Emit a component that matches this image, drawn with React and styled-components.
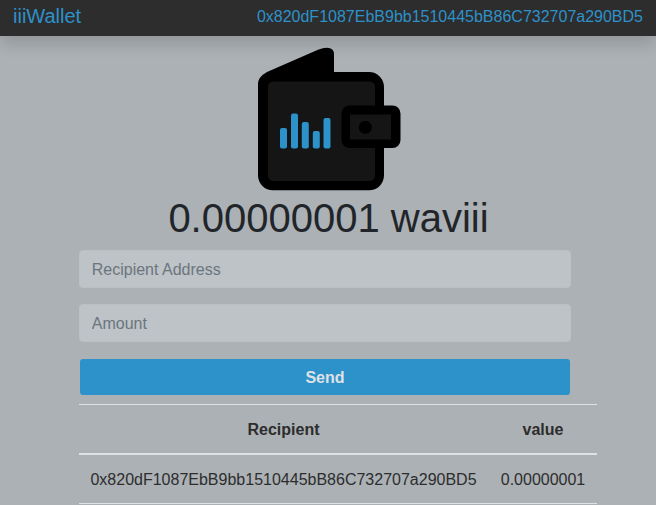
import React from 'react';
import styled, { createGlobalStyle } from 'styled-components';

const ADDRESS = '0x820dF1087EbB9bb1510445bB86C732707a290BD5';

const GlobalStyle = createGlobalStyle`
  *, *::before, *::after { box-sizing: border-box; }
  body {
    margin: 0;
    overflow: hidden;
    background: #acb1b5;
    color: #2d2d2d;
    font: 16px/24px "Liberation Sans", Arial, sans-serif;
  }
`;

const Page = styled.div`
  height: 505px;
  overflow: hidden;
`;

const Navbar = styled.nav`
  display: flex;
  justify-content: space-between;
  align-items: center;
  height: 36px;
  padding: 0 13px 4px;
  background: #2d2d2d;
  color: #2d91ca;
  box-shadow: 0 8px 16px rgba(0, 0, 0, 0.15);
`;

const Brand = styled.span`
  font-size: 20px;
  line-height: 30px;
`;

const Account = styled.span`
  padding-top: 2px;
  white-space: nowrap;
`;

const Hero = styled.header`
  display: flex;
  flex-direction: column;
  align-items: center;
  padding-top: 11px;
`;

const Logo = styled.svg`
  display: block;
  width: 144px;
  height: 144px;
  margin-left: 3px;
`;

const Balance = styled.h1`
  margin: 3px 0 8px;
  padding-left: 1px;
  color: #212529;
  font-size: 40px;
  font-weight: 400;
  line-height: 48px;
`;

const Content = styled.main`
  width: 492px;
  margin-left: 79px;
`;

const Form = styled.form`
  display: grid;
  gap: 16px;
`;

const Field = styled.input`
  width: 100%;
  height: 38px;
  padding: 7px 12px 5px 11.75px;
  border: 1px solid #bac0c4;
  border-radius: 4px;
  background: #bdc3c7;
  color: #2d2d2d;
  font: inherit;
  &::placeholder { color: #6c757d; opacity: 1; }
`;

const SendButton = styled.button`
  height: 36px;
  margin: 1px 1px 0;
  padding: 2px 0 0;
  border: 0;
  border-radius: 3px;
  background: #2d91ca;
  color: #dee2e6;
  font: inherit;
  font-weight: 700;
`;

const History = styled.table`
  width: 518px;
  margin-top: 9px;
  border-spacing: 0;
  text-align: center;
  color: #2d2d2d;
`;

const HeadCell = styled.th`
  width: ${({ $width }) => $width};
  padding: 13px 0 11px;
  border-top: 1px solid #dee2e6;
  border-bottom: 2px solid #dee2e6;
  &:last-child { padding-left: 1px; }
`;

const Cell = styled.td`
  padding: 13px 0 11px;
  border-bottom: 1px solid #dee2e6;
  &:last-child { padding-left: 1px; }
`;

const BARS = [
  [280, 128],
  [291, 113.5],
  [301.8, 122],
  [312.8, 131],
  [323.5, 118],
];

function WalletLogo() {
  return (
    <Logo viewBox="258 47 144 144" aria-label="Wallet">
      <path d="M258 87 V84 Q258 77 267 72 L318 49.8 Q325 47 329 48 Q334 49 334 54 V87Z" />
      <rect x="258" y="72" width="126" height="118.3" rx="15" />
      <rect x="268" y="81.5" width="107" height="99.5" rx="5.5" fill="#151515" />
      <rect x="341.5" y="105.5" width="59" height="42.5" rx="8" />
      <rect x="350" y="114.5" width="41" height="25" fill="#151515" />
      <circle cx="365.3" cy="127.3" r="6.5" />
      {BARS.map(([x, y]) => (
        <rect key={x} x={x} y={y} width="7" height={148.5 - y} rx="2" fill="#2d91ca" />
      ))}
    </Logo>
  );
}

export default function App() {
  return (
    <Page>
      <GlobalStyle />
      <Navbar>
        <Brand>iiiWallet</Brand>
        <Account>{ADDRESS}</Account>
      </Navbar>
      <Hero>
        <WalletLogo />
        <Balance>0.00000001 waviii</Balance>
      </Hero>
      <Content>
        <Form>
          <Field placeholder="Recipient Address" />
          <Field placeholder="Amount" />
          <SendButton type="button">Send</SendButton>
        </Form>
        <History>
          <thead>
            <tr>
              <HeadCell $width="409px">Recipient</HeadCell>
              <HeadCell $width="109px">value</HeadCell>
            </tr>
          </thead>
          <tbody>
            <tr>
              <Cell>{ADDRESS}</Cell>
              <Cell>0.00000001</Cell>
            </tr>
          </tbody>
        </History>
      </Content>
    </Page>
  );
}
